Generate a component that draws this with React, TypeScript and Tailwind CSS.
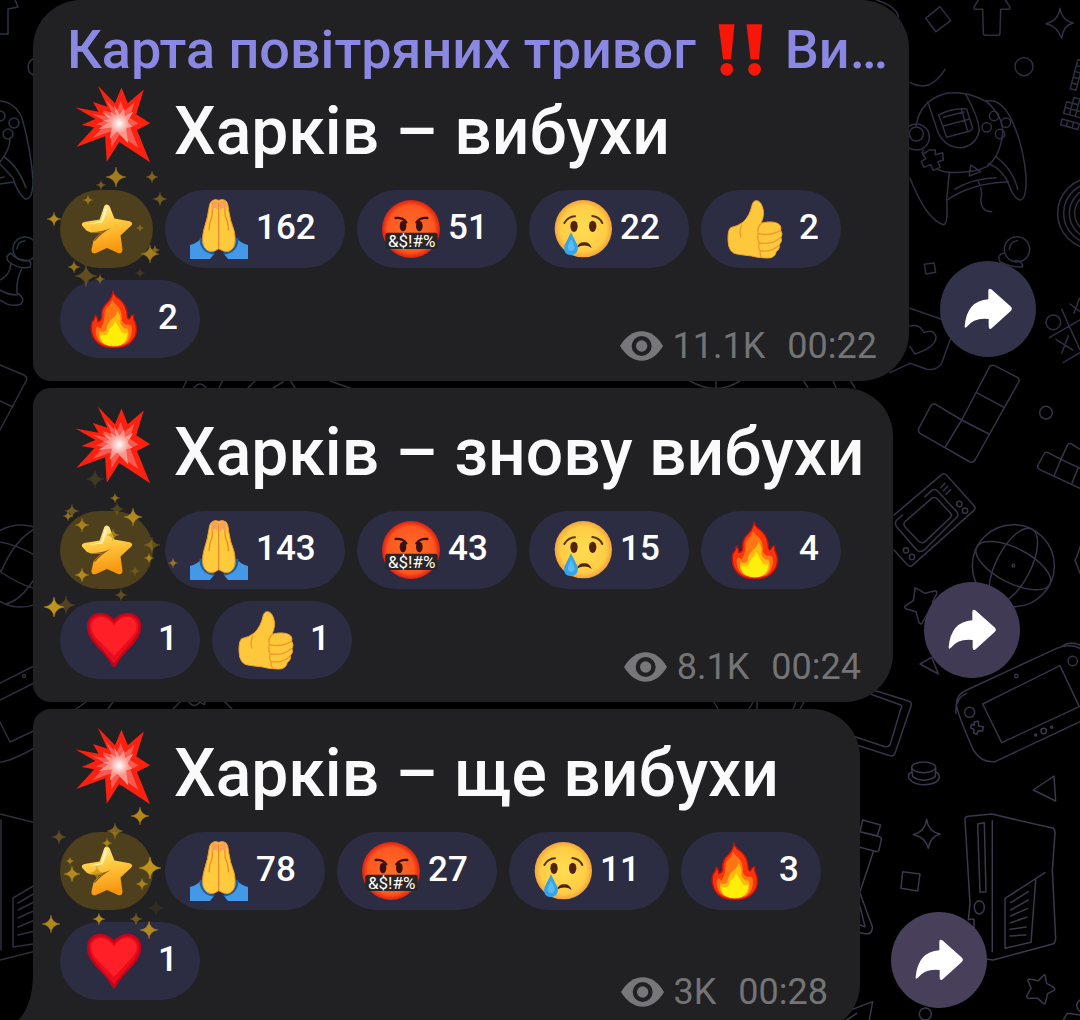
import React from "react";

type EmojiName = "pray" | "curse" | "cry" | "thumb" | "fire" | "heart";
type Spark = [x: number, y: number, r: number, opacity: number];

interface Message {
  title: string;
  reactions: [EmojiName, number][];
  views: string;
  time: string;
  bubble: string;
  chips: string;
  share: string;
  header?: boolean;
  tail?: boolean;
  sparks: Spark[];
}

const messages: Message[] = [
  {
    title: "Харків – вибухи",
    reactions: [["pray", 162], ["curse", 51], ["cry", 22], ["thumb", 2], ["fire", 2]],
    views: "11.1K",
    time: "00:22",
    bubble: "max-w-[876px] rounded-[48px] rounded-bl-[18px] pb-[15px]",
    chips: "pb-2",
    share: "bg-[#32324a] mb-6",
    header: true,
    sparks: [[56, -13, 10, 0.8], [92, -13, 6, 0.6], [41, -5, 5, 0.5], [28, 10, 5, 0.7], [100, 9, 7, 0.5], [-6, 29, 7, 0.9], [80, 38, 4, 0.5], [90, 64, 9, 0.8], [95, 60, 5, 0.6], [14, 77, 6, 0.7], [26, 86, 11, 0.4], [40, 89, 5, 0.6], [80, 83, 5, 0.2]],
  },
  {
    title: "Харків – знову вибухи",
    reactions: [["pray", 143], ["curse", 43], ["cry", 15], ["fire", 4], ["heart", 1], ["thumb", 1]],
    views: "8.1K",
    time: "00:24",
    bubble: "max-w-[860px] rounded-l-[18px] rounded-r-[48px] pb-[15px]",
    chips: "pb-2",
    share: "bg-[#413a55] mb-6",
    sparks: [[35, -32, 9, 0.2], [55, -13, 5, 0.7], [12, 0, 7, 0.5], [8, 5, 5, 0.7], [73, 6, 9, 0.9], [57, -2, 7, 0.3], [22, 14, 7, 0.8], [92, 34, 8, 0.4], [89, 47, 5, 0.8], [113, 52, 5, 0.7], [53, 24, 6, 0.7], [22, 64, 7, 0.9], [75, 60, 5, 0.3], [61, 84, 6, 0.4], [-6, 96, 10, 1], [6, 94, 9, 0.3]],
  },
  {
    title: "Харків – ще вибухи",
    reactions: [["pray", 78], ["curse", 27], ["cry", 11], ["fire", 3], ["heart", 1]],
    views: "3K",
    time: "00:28",
    bubble: "max-w-[827px] rounded-tl-[18px] rounded-r-[48px] pb-5",
    chips: "pb-3",
    share: "bg-[#483f5b] mb-6",
    tail: true,
    sparks: [[80, -16, 9, 0.9], [55, -1, 8, 0.6], [-1, 5, 7, 0.4], [47, 11, 5, 0.8], [10, 29, 4, 0.8], [12, 42, 8, 0.9], [37, 41, 7, 0.7], [90, 36, 11, 1], [82, 52, 6, 0.8], [96, 76, 8, 0.1], [39, 87, 6, 0.9], [76, 87, 6, 0.5], [89, 98, 9, 0.9], [-9, 92, 9, 0.9]],
  },
];

function Explosion() {
  const d = "M203 258L255 312L275 264L294 312L343 270L320 345L362 373L322 393L362 492L268 430L230 490L225 412L137 445L192 385L153 378L195 360L135 325L205 338L188 308L232 322Z";
  return (
    <svg viewBox="132 256 234 238" className="mb-3.5 size-[78px] shrink-0" role="img" aria-label="💥">
      <defs>
        <radialGradient id="core">
          <stop offset="0" stopColor="#fff" />
          <stop offset="0.3" stopColor="#fff" stopOpacity="0.7" />
          <stop offset="1" stopColor="#fff" stopOpacity="0" />
        </radialGradient>
      </defs>
      <path d={d} fill="#fb2110" />
      <path d={d} fill="#f75a50" transform="translate(268 374) scale(.62) translate(-268 -374)" />
      <path d={d} fill="#f8968d" transform="translate(268 374) rotate(14) scale(.44) translate(-268 -374)" />
      <circle cx="268" cy="374" r="30" fill="url(#core)" />
    </svg>
  );
}

function Exclamation() {
  return (
    <svg viewBox="176 75 134 155" className="mr-[22px] ml-[22px] h-[52px] w-[45px] shrink-0" role="img" aria-label="‼️">
      <g fill="#f8150a">
        <path d="M178 76H225L215 181H191ZM261 76H308L298 181H273Z" />
        <circle cx="202" cy="210" r="19" />
        <circle cx="285" cy="210" r="19" />
      </g>
    </svg>
  );
}

function StarIcon() {
  return (
    <svg viewBox="148 610 154 154" className="size-[52px]" aria-hidden="true">
      <defs>
        <linearGradient id="gold" x1="0" y1="0" x2="0.2" y2="1">
          <stop offset="0" stopColor="#fff0a8" />
          <stop offset="0.4" stopColor="#ffcf45" />
          <stop offset="1" stopColor="#f9960f" />
        </linearGradient>
      </defs>
      <path d="M217 619Q225 610 233 620L247 656L292 664Q304 668 297 677L265 706L271 748Q270 762 258 758L225 743L191 759Q178 760 179 748L185 722Q193 707 212 697Q180 702 165 692L152 678Q147 669 158 666L203 659Z" fill="url(#gold)" />
      <path d="M218 628Q222 620 226 630L212 668L170 672L207 663Z" fill="#fff3bd" />
      <path d="M172 695Q205 698 236 684Q208 700 190 722L185 722Q195 706 212 697Q188 700 172 695Z" fill="#8a560f" />
    </svg>
  );
}

function Emoji({ name }: { name: EmojiName }) {
  const cls = "size-[60px] shrink-0";
  switch (name) {
    case "pray":
      return (
        <svg viewBox="477 596 180 180" className={cls} role="img" aria-label="🙏">
          <path d="M480 734Q505 726 514 712Q525 752 553 760L540 776H480ZM654 734Q629 726 620 712Q609 752 581 760L594 776H654Z" fill="#4398e8" />
          <path d="M512 712Q511 752 553 760M622 712Q623 752 581 760" fill="none" stroke="#195f9a" strokeWidth="7" />
          <path d="M547 601Q555 595 566 600Q577 595 587 601Q594 606 596 630Q600 660 612 690Q620 725 610 742Q598 758 580 752L566 745L554 752Q536 758 524 742Q513 725 521 690Q534 650 539 612Q541 604 547 601Z" fill="#ffcb3d" stroke="#f2912c" strokeWidth="3" />
          <path d="M566 604V746M583 607L586 648Q596 668 595 690M549 607L546 648Q537 668 537 690" fill="none" stroke="#ee8b31" strokeWidth="4" />
          <path d="M543 605Q555 596 563 604V630Q550 610 545 640ZM570 604Q580 596 590 605L588 640Q582 610 570 630Z" fill="#f9a157" />
        </svg>
      );
    case "curse":
      return (
        <svg viewBox="123 596 180 180" className={cls} role="img" aria-label="🤬">
          <defs>
            <radialGradient id="rage">
              <stop offset="0" stopColor="#ff6c28" />
              <stop offset="0.8" stopColor="#fd5820" />
              <stop offset="1" stopColor="#dc2011" />
            </radialGradient>
          </defs>
          <circle cx="213" cy="686" r="87" fill="url(#rage)" />
          <path d="M167 653Q188 650 199 666M262 653Q241 650 229 666" fill="none" stroke="#38110b" strokeWidth="7" strokeLinecap="round" />
          <ellipse cx="189" cy="677" rx="10" ry="16" fill="#38110b" />
          <ellipse cx="238" cy="677" rx="10" ry="16" fill="#38110b" />
          <rect x="136" y="697" width="157" height="49" rx="8" fill="#2b2525" />
          <text x="215" y="740" textAnchor="middle" fontFamily="Roboto, sans-serif" fontSize="51" fontWeight="400" fill="#fff">&amp;$!#%</text>
        </svg>
      );
    case "cry":
      return (
        <svg viewBox="639 596 180 180" className={cls} role="img" aria-label="😢">
          <defs>
            <radialGradient id="face">
              <stop offset="0" stopColor="#ffdc50" />
              <stop offset="0.8" stopColor="#fecd45" />
              <stop offset="1" stopColor="#f5a23c" />
            </radialGradient>
          </defs>
          <circle cx="730" cy="685" r="86" fill="url(#face)" />
          <path d="M673 668Q684 649 705 648M757 647Q778 649 787 668" fill="none" stroke="#593414" strokeWidth="6" strokeLinecap="round" />
          <ellipse cx="702" cy="678" rx="11" ry="17" fill="#51230e" />
          <ellipse cx="758" cy="678" rx="11" ry="17" fill="#51230e" />
          <path d="M710 742Q718 724 733 726Q749 725 755 743Q735 729 710 742Z" fill="#51230e" />
          <path d="M693 696Q706 723 713 735Q718 761 694 765Q668 762 673 736Q680 722 693 696Z" fill="#35a4e8" />
          <path d="M693 716Q703 730 704 741Q702 752 693 752Q683 750 683 740Q685 730 693 716Z" fill="#58bdf4" />
        </svg>
      );
    case "thumb":
      return (
        <svg viewBox="195 596 180 180" className={cls} role="img" aria-label="👍">
          <path d="M289 601Q302 601 308 622Q315 642 303 669Q330 661 350 668Q366 674 362 690Q370 701 363 711Q368 724 358 733Q360 747 349 753Q345 775 320 773Q290 772 275 767L235 762Q205 760 204 720Q203 690 212 682Q235 677 250 665Q270 645 276 615Q279 601 289 601Z" fill="#ffc83c" stroke="#f0a030" strokeWidth="3" />
          <path d="M245 674Q238 688 242 710M303 670Q290 682 295 700Q290 716 298 728Q292 742 301 752Q299 764 304 770M296 700Q330 708 360 691M298 728Q335 734 361 712M301 751Q335 757 357 735" fill="none" stroke="#ed9a2c" strokeWidth="4" strokeLinecap="round" />
        </svg>
      );
    case "fire":
      return (
        <svg viewBox="162 866 180 180" className={cls} role="img" aria-label="🔥">
          <defs>
            <linearGradient id="flame" x1="0" y1="0" x2="0" y2="1">
              <stop offset="0" stopColor="#ff3a0c" />
              <stop offset="1" stopColor="#f5300c" />
            </linearGradient>
          </defs>
          <path d="M249 871Q250 885 268 896Q292 916 292 950Q297 962 302 950Q303 943 311 944Q309 955 316 967Q323 985 316 1006Q300 1042 251 1042Q203 1042 188 1006Q180 985 186 966Q194 958 196 945Q203 950 204 964Q216 962 215 945Q214 922 232 907Q248 890 249 871Z" fill="url(#flame)" stroke="#c80f08" strokeWidth="4" />
          <path d="M247 898Q250 906 261 915Q279 935 275 960Q281 972 290 973Q300 970 305 978Q310 1012 287 1030Q251 1048 214 1028Q193 1010 198 982Q203 974 211 985Q222 970 224 947Q222 925 239 915Z" fill="#ff7413" />
          <path d="M261 931Q275 944 271 968Q282 990 292 984Q303 1010 284 1028Q252 1044 218 1028Q203 1014 208 992Q222 998 229 990Q232 967 246 955Q261 945 261 931Z" fill="#ffb80c" />
          <path d="M255 962Q268 981 272 991Q281 1004 292 998Q290 1026 272 1034Q248 1042 224 1032Q208 1020 212 1003Q228 1010 234 998Q238 980 249 976Z" fill="#ffed0a" />
        </svg>
      );
    case "heart":
      return (
        <svg viewBox="162 690 180 180" className={cls} role="img" aria-label="❤️">
          <path d="M252 718Q278 690 310 701Q341 716 331 757Q324 778 302 802Q272 830 257 859Q252 865 247 859Q232 830 202 802Q180 778 173 757Q164 716 194 701Q226 690 252 718Z" fill="#c40519" />
          <path d="M252 728Q278 698 306 708Q334 722 324 754Q317 774 297 794L252 850L208 797Q187 776 180 754Q171 722 198 708Q228 699 252 728Z" fill="#e80c1d" />
          <path d="M252 736Q277 704 302 713Q327 725 318 751Q309 770 290 787L252 827L214 789Q193 772 186 751Q177 725 202 713Q227 704 252 736Z" fill="#ff2027" />
        </svg>
      );
  }
}

function Sparks({ items }: { items: Spark[] }) {
  return (
    <svg className="pointer-events-none absolute inset-0 z-10 size-px overflow-visible" aria-hidden="true">
      {items.map(([x, y, r, o], i) => (
        <path
          key={i}
          d="M0-10Q.7-1.500 10 0Q.7 1.500 0 10Q-.7 1.500-10 0Q-.7-1.500 0-10Z"
          transform={`translate(${x} ${y}) scale(${r / 10})`}
          fill="#c0931d"
          stroke="#c0931d"
          strokeWidth="0.4"
          opacity={o}
        />
      ))}
    </svg>
  );
}

function Reaction({ name, count }: { name: EmojiName; count: number }) {
  return (
    <button
      type="button"
      className={
        "flex h-[78px] items-center rounded-full bg-[#2c2d42] pl-6 text-[35px] font-medium text-white " +
        (count < 10 ? "min-w-[140px] justify-between pr-[22px]" : count < 100 ? "min-w-[160px] gap-[7px] pr-7" : "min-w-[180px] gap-[7px] pr-7")
      }
    >
      <Emoji name={name} />
      <span className="pb-0.5">{count}</span>
    </button>
  );
}

function Eye() {
  return (
    <svg viewBox="843 992 129 90" className="mr-2.5 h-[30px] w-[43px]" role="img" aria-label="Views">
      <path d="M843 1037Q870 993 908 993Q946 993 972 1037Q946 1081 908 1081Q870 1081 843 1037Z" fill="#77777b" />
      <circle cx="908" cy="1037" r="30" fill="#212123" />
      <circle cx="908" cy="1037" r="17" fill="#77777b" />
    </svg>
  );
}

function MessageRow({ m }: { m: Message }) {
  return (
    <article className="flex items-end">
      <div className={"relative w-full bg-[#212123] px-[27px] " + m.bubble}>
        {m.tail && (
          <svg viewBox="0 0 24 62" className="absolute bottom-0 -left-[23px] h-[62px] w-6" aria-hidden="true">
            <path d="M24 0H23Q24 42 0 57V62H24Z" fill="#212123" />
          </svg>
        )}
        {m.header && (
          <a href="#channel" className="flex h-[67px] items-center pt-8 pl-[7px] text-[54px] font-medium whitespace-nowrap text-[#8b88e3]">
            Карта повітряних тривог
            <Exclamation />
            Ви…
          </a>
        )}
        <h2 className="flex h-[123px] items-center gap-[22px] pt-[5px] pl-3.5 text-[66px] font-medium whitespace-nowrap text-[#fafafa]">
          <Explosion />
          {m.title}
        </h2>
        <div className="grid">
          <div className={"col-start-1 row-start-1 flex flex-wrap gap-3 " + m.chips}>
            <button type="button" aria-label="Star" className="relative flex h-[78px] w-[93px] items-center justify-center rounded-full bg-[#4e401c]">
              <StarIcon />
              <Sparks items={m.sparks} />
            </button>
            {m.reactions.map(([name, count]) => (
              <Reaction key={name} name={name} count={count} />
            ))}
          </div>
          <div className="col-start-1 row-start-1 mr-[5px] flex items-center self-end justify-self-end text-4xl text-[#747476]">
            <Eye />
            <span className="mr-[22px]">{m.views}</span>
            <time>{m.time}</time>
          </div>
        </div>
      </div>
      <button type="button" aria-label="Share" className={"ml-[31px] flex size-24 shrink-0 items-center justify-center rounded-full " + m.share}>
        <svg viewBox="912 855 144 144" className="size-12" aria-hidden="true">
          <path d="M985 873Q985 862 994 868L1053 920Q1058 926 1053 932L995 985Q987 990 986 980L986 957Q942 952 920 981Q913 986 914 978Q921 902 985 898Z" fill="#fff" />
        </svg>
      </button>
    </article>
  );
}

function Wallpaper() {
  return (
    <svg viewBox="0 0 1080 1020" className="pointer-events-none absolute top-0 left-0 h-[1020px] w-[1080px]" aria-hidden="true" fill="none" strokeLinecap="round" strokeLinejoin="round">
      <g stroke="#2b3344" strokeWidth="1.500">
        <path d="M15 0L18 7L8 9V34H0M33 59A9 9 0 0 0 33 75" />
        <path d="M0 101Q15 102 22 118Q31 150 33 180Q33 200 25 199Q17 192 13 178L0 164M4 157Q18 166 26 188M0 184L14 182M10 138Q10 150 0 162M0 178L4 177" />
        <circle cx="14" cy="123" r="5" /><circle cx="8" cy="134" r="5" /><circle cx="0" cy="116" r="5" />
        <circle cx="25" cy="249" r="12" />
        <path d="M17 249Q18 241 25 241M11 253Q4 257 9 262Q20 270 30 267Q33 260 24 260Q15 259 11 253M11 264Q10 275 0 280M22 268Q16 280 17 293Q26 298 21 304Q12 308 0 300M0 290Q8 295 17 295" />
      </g>
      <g stroke="#302e3b" strokeWidth="1.500">
        <path d="M0 365L24 375Q29 378 25 383L0 430M0 401L13 407" />
        <circle cx="21" cy="566" r="41" />
        <path d="M0 542Q18 545 36 556M1 572Q14 540 36 528M1 572Q18 584 36 589M6 604Q22 600 36 576M0 570L1 572" />
        <path d="M0 683L40 663M0 700L40 680M0 722L10 742L40 728M0 762Q10 762 40 745" />
        <circle cx="24" cy="676" r="1.500" />
        <path d="M0 814L40 824M1 820V950M13 898L40 882M13 898V947L40 943M18 903L40 890M18 910L40 899M18 918L40 908M18 927L40 918M18 935L40 930M0 960L40 950" />
        <path d="M183 388L187 380M194 388Q200 380 206 388M219 388L223 380M248 388L256 380M273 388L283 382M290 380L295 388M330 381L350 388M690 381Q716 396 740 381M716 380V388M803 380L808 388M833 380L836 388M850 380L855 388M76 709L86 702M108 709L113 702M173 709L180 702M189 702Q194 709 200 702Q207 707 204 702M225 702L232 709M714 702L718 709M749 709L753 702M757 702V709M793 709L796 702M800 709L804 702" />
      </g>
      <g stroke="#302e43" strokeWidth="4.500" transform="translate(660 0) scale(.33333)">
        <path d="M797 55L840 20L872 62L828 95ZM968 28L970 100Q970 106 976 106H1014Q1020 106 1020 100L1022 28H1045Q1053 28 1048 18L1036 0M968 28H948Q938 28 944 18L955 0M1200 25Q1206 62 1240 69Q1210 75 1205 115Q1192 78 1158 71Q1195 62 1200 25ZM650 0Q710 20 715 50M750 248Q810 280 855 208" />
        <circle cx="1092" cy="200" r="27" />
        <path d="M768 378Q780 300 860 280Q920 272 980 305Q1030 350 1028 400Q1020 470 980 500Q940 520 870 517Q845 515 835 508M980 303Q1020 295 1050 350Q1090 430 1098 530Q1100 600 1080 600Q1060 595 1045 550Q1030 510 985 490M1008 470Q1060 510 1073 568M803 305L835 400Q860 445 905 443Q950 435 958 390Q955 350 918 285M836 345Q880 322 920 327L938 385L930 393L860 412ZM850 352L912 336M851 378L926 358M905 330L922 390M868 517L860 600Q865 675 850 674Q800 660 750 535M862 600Q930 550 1045 545M885 567Q940 535 1008 533M955 545Q970 570 962 600Q965 637 995 635M932 495L962 515L928 528Z" />
        <circle cx="1002" cy="348" r="14" /><circle cx="1038" cy="368" r="14" /><circle cx="980" cy="382" r="14" /><circle cx="1020" cy="402" r="14" />
        <circle cx="769" cy="411" r="39" /><circle cx="769" cy="402" r="21" />
        <path d="M790 450L786 458M807 450L826 450L826 464L848 458L850 480L834 485L840 502L820 511L812 494L792 502L784 484L798 476L788 462L800 456Z" />
        <g transform="rotate(15 1240 300)">
          <path d="M1222 180H1240V270H1222ZM1222 198H1240M1222 216H1240M1222 234H1240M1222 252H1240M1222 310H1258V346H1222ZM1240 292V346M1222 328H1276M1240 292H1276V346H1258V292M1222 364H1276V382H1222ZM1240 364V382M1258 364V382" />
        </g>
        <circle cx="1300" cy="640" r="107" /><circle cx="1303" cy="640" r="92" /><circle cx="1306" cy="640" r="78" /><circle cx="1306" cy="640" r="62" />
        <circle cx="1071" cy="748" r="38" />
        <path d="M1048 748Q1050 725 1072 722M1030 760Q1010 765 1020 785Q1060 805 1088 800Q1085 780 1065 782M793 793L822 789L827 817L798 822Z" />
        <circle cx="1180" cy="967" r="22" />
        <path d="M1205 928L1260 1050M1168 1013L1260 960M1188 1018L1238 1050M1225 1008L1205 1060M1230 912L1260 935M1258 895L1242 940M1210 1087L1260 1058M750 925L845 958M750 1040L765 1062Q830 1040 828 1010Q820 985 792 998Q780 970 750 978M872 1015L845 1090Q830 1112 800 1108L750 1090L690 1118" />
      </g>
      <g stroke="#373449" strokeWidth="4.500" transform="translate(660 370) scale(.33333)">
        <path d="M990-12Q1000-18 1010-10L1072 22Q1080 27 1076 36L945 270Q940 278 930 276L780 190Q773 184 776 176L812 108Q817 100 827 103L905 150ZM950 68L1032 112M905 150L987 192M905 150L855 232M1260 238L1235 222Q1226 218 1222 226L1203 268L1165 248Q1156 244 1152 252L1134 285Q1130 293 1138 298L1260 355M1203 268L1182 318M1203 268L1260 295M1255 292L1235 342" />
        <circle cx="1158" cy="128" r="19" />
        <path d="M702 435L845 314Q853 308 860 316L943 408Q948 415 941 422L757 586Q750 592 742 584L702 540M735 455L815 385Q822 380 830 385L872 430Q878 437 870 444L795 515Q785 522 775 513L735 470Q728 462 735 455ZM795 380L815 362Q825 355 832 362L890 425Q898 435 890 442L795 538Q780 550 770 540L710 470Q702 460 710 450L728 435M842 353L855 340M850 362L863 349M858 373L872 359" />
        <circle cx="898" cy="402" r="8" /><circle cx="915" cy="422" r="8" /><circle cx="738" cy="541" r="8" /><circle cx="756" cy="561" r="8" />
        <circle cx="1060" cy="587" r="123" />
        <ellipse cx="1060" cy="587" rx="123" ry="52" transform="rotate(27 1060 587)" />
        <ellipse cx="1060" cy="587" rx="52" ry="123" transform="rotate(27 1060 587)" />
        <circle cx="1060" cy="587" r="4" />
        <path d="M765 658Q760 650 775 658L795 670L825 662Q832 662 830 672L818 695L825 730L800 735L785 762Q778 762 776 755L768 725L737 716Q730 710 740 705L760 692ZM780 882L815 862L835 912ZM1260 530L1250 562L1245 570L1260 610M1260 835Q1230 820 1190 835L920 960Q885 975 890 1010Q900 1050 940 1140Q965 1180 1005 1175L1260 1055M1205 829Q1230 812 1260 825M888 1030Q884 985 920 970M968 1002L1200 887L1258 1010L1025 1118Z" />
        <circle cx="1238" cy="873" r="14" /><circle cx="929" cy="1027" r="15" /><circle cx="1069" cy="918" r="5" />
        <path d="M640 960L745 993Q755 996 754 1005L705 1150Q702 1160 690 1157L560 1115M625 970L722 1005Q728 1010 722 1018L690 1125Q685 1132 675 1130L560 1092" />
      </g>
      <g stroke="#3c374c" strokeWidth="4.500" transform="translate(660 690) scale(.33333)">
        <path d="M942 96L955 94L956 108L970 110L968 123L955 122L950 133L941 129L942 118L932 114L934 103L943 106Z" />
        <circle cx="1151" cy="123" r="8" /><circle cx="1127" cy="135" r="3" /><circle cx="1175" cy="112" r="3" />
        <ellipse cx="791" cy="232" rx="36" ry="16" />
        <path d="M755 234L758 260Q790 282 826 260L827 234M755 246Q742 252 747 265Q760 284 793 284Q835 282 838 262Q838 250 828 246M1120 300L1182 258L1187 333ZM800 388Q805 425 840 432Q810 440 805 475Q795 440 760 434Q795 425 800 388ZM728 545L780 552L773 603L723 595ZM608 390L662 405L652 437L600 425ZM600 425L658 440Q666 443 663 452L657 480Q652 487 645 484L600 472M600 605L640 485M600 610L637 710Q638 730 620 732L600 728M600 650L615 710L600 705" />
        <path d="M960 805L1000 810L1178 762Q1187 758 1187 745L1177 540L1185 430Q1186 420 1180 415L995 372L925 379Q915 380 915 390L930 640L925 690M997 392V785M953 402L973 398L978 605L960 607ZM928 688H942V725M1035 625L1155 548M1035 625V775L1113 757L1127 570M1052 638L1105 605M1052 660L1105 630M1052 678L1103 655M1052 698L1100 682M1050 718L1098 711M1050 738L1098 735" />
        <ellipse cx="958" cy="652" rx="15" ry="20" />
        <path d="M1155 855Q1152 853 1147 860L1135 872L1108 867Q1100 868 1106 877L1113 895L1100 918Q1100 927 1112 925L1133 925L1150 940Q1156 944 1157 935L1163 911L1182 901Q1187 896 1180 891L1160 880ZM1210 990L1222 970L1260 975M1260 930Q1240 945 1260 965M638 935L520 980M638 935L628 990M560 990L590 970" />
        <circle cx="796" cy="972" r="18" />
      </g>
    </svg>
  );
}

export default function App() {
  return (
    <main className="relative h-screen overflow-hidden bg-black font-['Roboto',sans-serif]">
      <Wallpaper />
      <div className="relative flex flex-col gap-[7px] pr-3 pl-[33px]">
        {messages.map((m) => (
          <MessageRow key={m.time} m={m} />
        ))}
      </div>
    </main>
  );
}
